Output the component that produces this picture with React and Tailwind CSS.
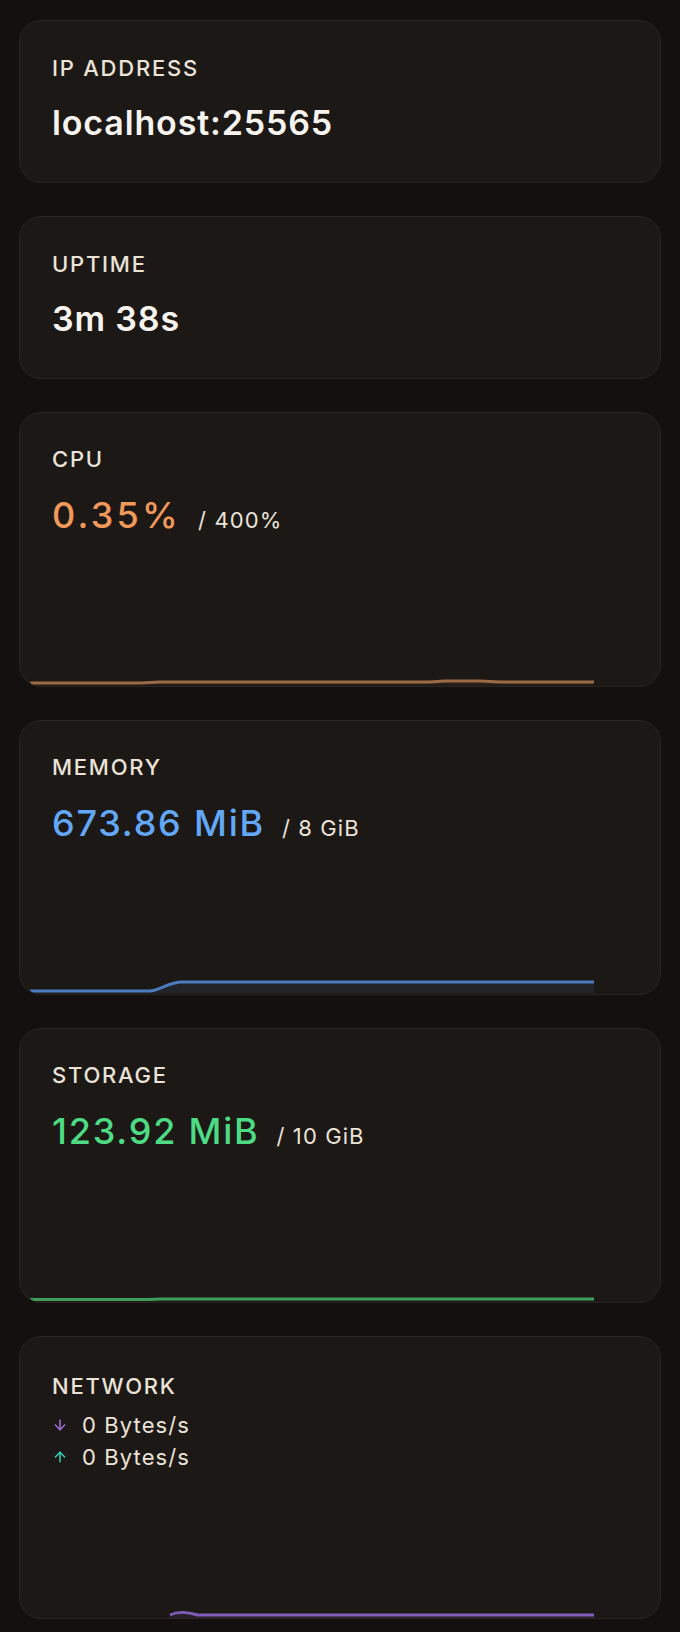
import React from 'react';
import { ArrowDown, ArrowUp } from 'lucide-react';

const font = { fontFamily: 'Inter, "Noto Sans", sans-serif' };

// tiny area chart drawn at the bottom of a stat card
const Spark = ({ line, fill, stroke, className = '' }) => (
  <svg width="564" height="100" viewBox="0 0 564 100" className={`block ${className}`}>
    <path d={`${line} L564 100 L0 100 Z`} fill={fill} />
    <path d={line} fill="none" stroke={stroke} strokeWidth="3" strokeLinejoin="round" />
  </svg>
);

const Card = ({ children, className = '' }) => (
  <div className={`rounded-[22px] border border-[#2a2522] bg-[#1c1816] ${className}`}>{children}</div>
);

const Label = ({ children }) => (
  <div className="text-[22px] leading-7 font-medium tracking-[0.08em] text-[#ebe3d8]">{children}</div>
);

const StatCard = ({ label, value }) => (
  <Card className="pt-[33px] pb-[39px] px-8">
    <Label>{label}</Label>
    <div className="mt-[21px] text-[34px] leading-10 font-semibold tracking-[0.025em] text-[#f7f4f0]">{value}</div>
  </Card>
);

const ChartCard = ({ label, value, total, color, chart }) => (
  <Card className="h-[275px] flex flex-col overflow-hidden">
    <div className="pt-8 px-8">
      <Label>{label}</Label>
      <div className="mt-[22px] flex items-baseline gap-[17px]">
        <span className={`text-[36px] leading-10 font-medium tracking-[0.05em] ${color}`}>{value}</span>
        <span className="text-[22px] tracking-[0.05em] text-[#ebe3d8]">{total}</span>
      </div>
    </div>
    <div className="mt-auto mb-[1px] ml-[10px]">{chart}</div>
  </Card>
);

export default function App() {
  return (
    <div className="min-h-[1632px] bg-[#13100f] px-[19px] pt-5 pb-3" style={font}>
      <div className="flex flex-col gap-[33px]">
        <StatCard label="IP ADDRESS" value="localhost:25565" />
        <StatCard label="UPTIME" value="3m 38s" />

        <ChartCard
          label="CPU"
          value="0.35%"
          total="/ 400%"
          color="text-[#f1985b] tracking-[0.09em]"
          chart={
            <Spark
              line="M0 98 L110 98 L130 97 L400 97 L415 96 L450 96 L470 97 L564 97"
              fill="rgba(241,152,91,0.06)"
              stroke="#9c6a44"
            />
          }
        />

        <ChartCard
          label="MEMORY"
          value="673.86 MiB"
          total="/ 8 GiB"
          color="text-[#63a8f6]"
          chart={
            <Spark
              line="M0 98 L119 98 C130 98 138 89 152 89 L564 89"
              fill="rgba(99,168,246,0.09)"
              stroke="#4a7dc0"
            />
          }
        />

        <ChartCard
          label="STORAGE"
          value="123.92 MiB"
          total="/ 10 GiB"
          color="text-[#4ddc84]"
          chart={
            <Spark
              line="M0 98.5 L120 98.5 L130 98 L564 98"
              fill="rgba(77,220,132,0.06)"
              stroke="#3e9c5d"
            />
          }
        />

        <Card className="h-[283px] flex flex-col overflow-hidden">
          <div className="pt-[35px] px-8">
            <Label>NETWORK</Label>
            <div className="mt-[9px] flex flex-col text-[22px] leading-8 tracking-[0.05em] text-[#ebe3d8]">
              <div className="flex items-center gap-[14px]">
                <ArrowDown size={16} strokeWidth={2.25} className="text-[#a26ee0]" />
                <span>0 Bytes/s</span>
              </div>
              <div className="flex items-center gap-[14px]">
                <ArrowUp size={16} strokeWidth={2.25} className="text-[#2fd1b8]" />
                <span>0 Bytes/s</span>
              </div>
            </div>
          </div>
          <div className="mt-auto ml-[10px]">
            <svg width="564" height="20" viewBox="0 0 564 20" className="block">
              <path d="M140 17 C148 13 158 14 168 17 L564 17 L564 20 L140 20 Z" fill="rgba(162,110,224,0.08)" />
              <path d="M140 17 C148 13 158 14 168 17 L564 17" fill="none" stroke="#7e5cb8" strokeWidth="3" />
            </svg>
          </div>
        </Card>
      </div>
    </div>
  );
}
